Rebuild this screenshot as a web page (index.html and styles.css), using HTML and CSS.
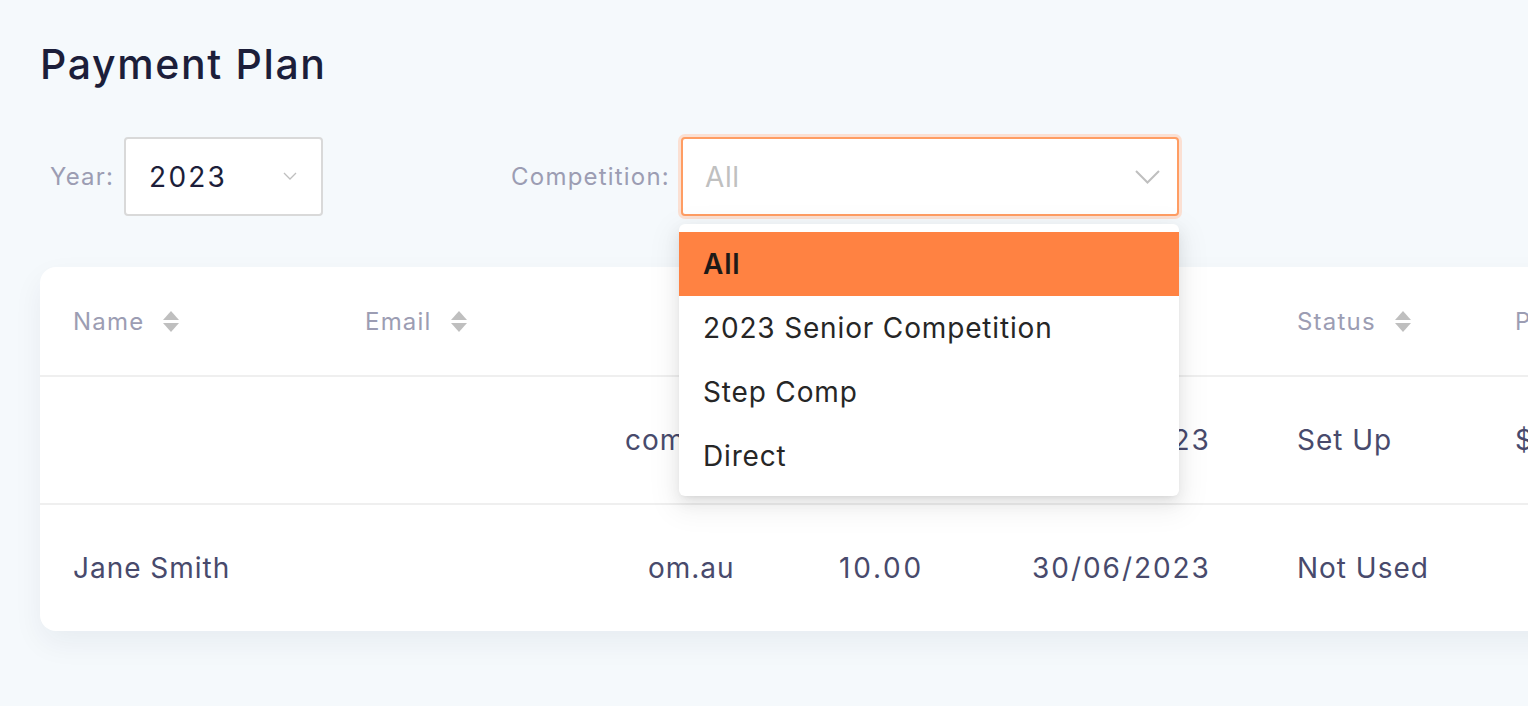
FILE: index.html
```html
<!DOCTYPE html>
<html lang="en">
<head>
  <meta charset="UTF-8">
  <meta name="viewport" content="width=device-width, initial-scale=1.0">
  <title>Payment Plan</title>
  <link rel="stylesheet" href="styles.css">
</head>
<body>
  <div class="page">
    <h1 class="title">Payment Plan</h1>

    <div class="filters">
      <div class="filter year-filter">
        <label class="filter-label">Year:</label>
        <div class="select year-select">
          <span class="select-value">2023</span>
          <svg class="chevron small" width="14" height="9" viewBox="0 0 14 9">
            <path d="M1 1l6 6 6-6" fill="none" stroke="#bfbfbf" stroke-width="1.3"/>
          </svg>
        </div>
      </div>

      <div class="filter comp-filter">
        <label class="filter-label">Competition:</label>
        <div class="select comp-select focused">
          <span class="select-placeholder">All</span>
          <svg class="chevron" width="25" height="14" viewBox="0 0 25 14">
            <path d="M1 1l11.5 11.5L24 1" fill="none" stroke="#bfbfbf" stroke-width="2"/>
          </svg>
        </div>
        <ul class="dropdown">
          <li class="option active">All</li>
          <li class="option">2023 Senior Competition</li>
          <li class="option">Step Comp</li>
          <li class="option">Direct</li>
        </ul>
      </div>
    </div>

    <div class="card">
      <div class="row head">
        <div class="cell">Name <span class="sorter"><i class="up"></i><i class="down"></i></span></div>
        <div class="cell">Email <span class="sorter"><i class="up"></i><i class="down"></i></span></div>
        <div class="cell"></div>
        <div class="cell"></div>
        <div class="cell">Status <span class="sorter"><i class="up"></i><i class="down"></i></span></div>
        <div class="cell">Payment</div>
      </div>
      <div class="row">
        <div class="cell"></div>
        <div class="cell"><span class="email-a">com</span></div>
        <div class="cell"></div>
        <div class="cell date">30/06/2023</div>
        <div class="cell">Set Up</div>
        <div class="cell">$10.00</div>
      </div>
      <div class="row">
        <div class="cell">Jane Smith</div>
        <div class="cell"><span class="email-b">om.au</span></div>
        <div class="cell num">10.00</div>
        <div class="cell date">30/06/2023</div>
        <div class="cell">Not Used</div>
        <div class="cell"></div>
      </div>
    </div>
  </div>
</body>
</html>
```

FILE: styles.css
```css
html, body {
  margin: 0;
  height: 100%;
  overflow: hidden;
}
body {
  font-family: Inter, "Noto Sans", Arial, sans-serif;
  background-color: #f5f9fc;
  color: #1c1e3a;
  letter-spacing: 0.04em;
}
.page {
  padding: 40px 0 0 40px;
}
.title {
  margin: 0;
  font-size: 41px;
  line-height: 48px;
  font-weight: 500;
  color: #1c1e3a;
  letter-spacing: 0.04em;
}

/* filters */
.filters {
  display: flex;
  align-items: center;
  margin-top: 49px;
  height: 79px;
}
.filter {
  display: flex;
  align-items: center;
  position: relative;
}
.year-filter {
  margin-left: 10px;
}
.comp-filter {
  margin-left: 188px;
}
.filter-label {
  font-size: 24px;
  color: #9c9db3;
  margin-right: 10px;
  letter-spacing: 0.05em;
}
.comp-filter .filter-label {
  margin-right: 11px;
}
.select {
  box-sizing: border-box;
  height: 79px;
  background-color: #fff;
  border: 2px solid #d9d9d9;
  border-radius: 4px;
  display: flex;
  align-items: center;
  justify-content: space-between;
  font-size: 28px;
}
.year-select {
  width: 199px;
  padding: 0 24px 0 23px;
}
.select-value {
  color: #1c1e3a;
  letter-spacing: 2.2px;
}
.comp-select {
  width: 498px;
  padding: 0 17px 0 22px;
}
.comp-select.focused {
  border-color: #ff9d63;
  box-shadow: 0 0 0 3px #fbe0d3;
}
.select-placeholder {
  color: #c0c0c0;
}
.chevron {
  display: block;
}

/* dropdown */
.dropdown {
  position: absolute;
  top: 87px;
  right: 0;
  width: 500px;
  margin: 0;
  padding: 8px 0;
  list-style: none;
  background-color: #fff;
  border-radius: 6px;
  box-shadow: 0 6px 16px 0 rgba(0, 0, 0, 0.08), 0 3px 6px -4px rgba(0, 0, 0, 0.12), 0 9px 28px 8px rgba(0, 0, 0, 0.05);
  z-index: 10;
}
.option {
  height: 64px;
  line-height: 64px;
  padding: 0 24px;
  font-size: 28px;
  color: #262626;
  letter-spacing: 0.03em;
}
.option.active {
  background-color: #ff8242;
  font-weight: 600;
  color: #1f1a17;
}

/* table */
.card {
  margin-top: 51px;
  width: 1600px;
  background-color: #fff;
  border-radius: 16px;
  box-shadow: 0 12px 30px rgba(20, 30, 60, 0.06);
  overflow: hidden;
}
.row {
  display: grid;
  grid-template-columns: 292px 474px 193px 265px 218px 1fr;
  padding-left: 33px;
  align-items: center;
  height: 126px;
  border-top: 2px solid #efefef;
  font-size: 28px;
  color: #484a6c;
  letter-spacing: 0.035em;
}
.row.head {
  height: 108px;
  border-top: none;
  font-size: 24px;
  color: #9c9db3;
  letter-spacing: 0.05em;
}
.cell {
  white-space: nowrap;
  display: flex;
  align-items: center;
}
.cell.num {
  letter-spacing: 0.1em;
}
.cell.date {
  letter-spacing: 0.07em;
}
.email-a {
  padding-left: 260px;
}
.email-b {
  padding-left: 283px;
}
.sorter {
  display: inline-flex;
  flex-direction: column;
  gap: 3px;
  margin-left: 19px;
}
.sorter i {
  display: block;
  width: 0;
  height: 0;
  border-left: 8px solid transparent;
  border-right: 8px solid transparent;
}
.sorter .up {
  border-bottom: 9px solid #bfbfbf;
}
.sorter .down {
  border-top: 9px solid #bfbfbf;
}
```
